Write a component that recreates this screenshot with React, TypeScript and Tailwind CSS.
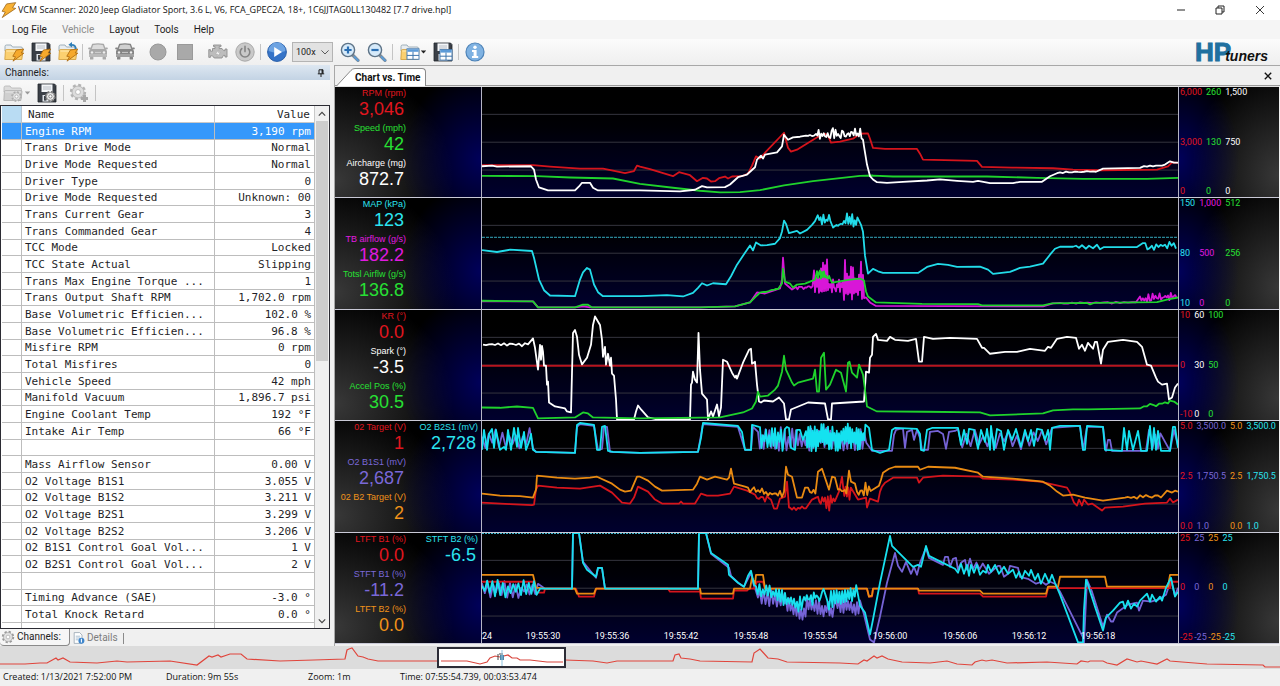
import type { ReactNode } from "react";

/* ---------- trace helpers ---------- */

function rand(seed: number) {
  let s = seed * 9301 + 49297;
  return () => {
    s = (s * 1103515245 + 12345) % 2147483648;
    return s / 2147483648;
  };
}

/** Alternating jagged run between two points, reaching `up` above and `down` below the trend. */
function burst(x0: number, x1: number, step: number, y0: number, y1: number, up: number, down: number, seed: number) {
  const r = rand(seed);
  const out: string[] = [];
  let sign = -1;
  for (let x = x0; x <= x1; x += step) {
    const y = y0 + ((y1 - y0) * (x - x0)) / (x1 - x0);
    const n = r();
    const k = up < 9 ? 0.1 + 0.9 * n * n : 0.2 + 0.8 * n;
    out.push(`${x.toFixed(1)},${(y + (sign < 0 ? -up * k : down * k)).toFixed(1)}`);
    if (up >= 9 || r() > 0.2) sign = -sign;
  }
  return out.join(" ");
}

type Trace = { color: string; points: string; width?: number; dash?: string };
type Gauge = { label: string; value: string; tone: string };
type Scale = { tone: string; marks: [string, string, string] };
type Panel = { name: string; top: number; gauges: Gauge[][]; scales: Scale[]; traces: Trace[]; times?: boolean };

const RED = "#d5141c";
const GREEN = "#1fd22c";
const WHITE = "#ffffff";
const CYAN = "#22dcea";
const MAGENTA = "#d816d8";
const PURPLE = "#7563d6";
const ORANGE = "#e98a12";

const tRed = "text-[#e0161f]";
const tGreen = "text-[#27e034]";
const tWhite = "text-white";
const tCyan = "text-[#2be4f0]";
const tMagenta = "text-[#e01ae0]";
const tPurple = "text-[#7a68d8]";
const tOrange = "text-[#f0921a]";

const panels: Panel[] = [
  {
    name: "Engine speed",
    top: 87,
    gauges: [
      [
        { label: "RPM (rpm)", value: "3,046", tone: tRed },
        { label: "Speed (mph)", value: "42", tone: tGreen },
        { label: "Aircharge (mg)", value: "872.7", tone: tWhite },
      ],
    ],
    scales: [
      { tone: tRed, marks: ["6,000", "3,000", "0"] },
      { tone: tGreen, marks: ["260", "130", "0"] },
      { tone: tWhite, marks: ["1,500", "750", "0"] },
    ],
    traces: [
      {
        color: RED,
        points:
          "482,165.5 533,165.5 550,167 580,169 603,169 613,171 625,173.7 634,171.5 637,166 640,167 650,169.5 673,176.7 679,172.7 690,175.7 697,181.7 703,178.3 707,179 711,182 715,181.7 719,178.7 725,177 728,179 732,177 742,176.7 748,174 752,166 756,156.7 760,159 766,152 784,133 788,148 791,152 797,150 818,137 825,134 828,136 831,143 840,142 853,139 860,134 868,133.7 870,139 873,148.3 885,149.3 917,149.3 920,154 923,160 977,161.3 982,167.3 1012,168 1053,168.7 1073,170 1100,170.7 1157,170 1168,166.7 1172,162.7 1178,163.3",
      },
      {
        color: GREEN,
        points:
          "482,176.3 537,176.7 570,178 613,179 640,184.3 673,188.3 700,191.3 720,193 740,192.7 760,190.7 784,186 813,181.7 840,178.7 860,176.3 873,176 893,177 987,177 1037,178.3 1083,179.3 1147,179.3 1178,178.3",
      },
      {
        color: WHITE,
        points: `482,166.7 492,166 497,167 531,166.7 534,170 536,180 539,188 548,191 575,191 579,187 582,183.3 590,183.3 593,188.3 598,191 640,191 680,192 695,190.3 702,186.7 707,188 725,187.7 730,185 738,177.7 747,175 755,167.7 757,160 761,156 763,159 765,155 777,152.7 782,146.7 784,135 788,140 793,137.7 800,137 ${burst(806, 815, 2, 136, 136, 1, 1, 3)} ${burst(816, 862, 1.3, 135, 135, 7, 5, 7)} 863,140 864,146.7 867,165 870,176.7 873,180 877,182.7 887,183.3 903,182.3 927,181 940,179.9 957,181.3 973,182.3 978,181.3 990,183.7 1013,183.7 1020,182.3 1042,182.3 1050,176.7 1057,173.7 ${burst(1060, 1097, 3, 173, 172, 1, 1, 9)} 1103,169 1140,168.3 ${burst(1144, 1167, 3, 167, 166, 2, 2, 12)} 1170,161.7 1174,163 1178,163`,
      },
    ],
  },
  {
    name: "Airflow",
    top: 198,
    gauges: [
      [
        { label: "MAP (kPa)", value: "123", tone: tCyan },
        { label: "TB airflow (g/s)", value: "182.2", tone: tMagenta },
        { label: "Totsl Airflw (g/s)", value: "136.8", tone: tGreen },
      ],
    ],
    scales: [
      { tone: tCyan, marks: ["150", "80", "10"] },
      { tone: tMagenta, marks: ["1,000", "500", "0"] },
      { tone: tGreen, marks: ["512", "256", "0"] },
    ],
    traces: [
      { color: "#35a9bd", points: "482,237.5 1178,237.5", width: 1, dash: "3 1" },
      {
        color: MAGENTA,
        points: `482,302 533,302 538,308 575,308 583,307 590,308 700,308 735,307 750,303 757,293 765,294 780,289 782,280 783,258 785,284 792,290 ${burst(796, 813, 1.5, 288, 287, 2, 4, 21)} ${burst(814, 821, 1, 284, 284, 14, 12, 22)} ${burst(821, 828, 1, 280, 280, 27, 18, 25)} ${burst(829, 844, 1, 286, 286, 7, 15, 23)} ${burst(845, 864, 1, 284, 284, 24, 17, 31)} 866,298 870,303 876,306.5 1043,307 1053,304 ${burst(1060, 1138, 4, 303.5, 303, 1, 1, 5)} ${burst(1140, 1177, 1.4, 300, 296, 5, 4, 26)}`,
      },
      {
        color: GREEN,
        points: `482,301.3 533,302 538,308 575,308 583,305.3 588,305.3 592,308 700,308 735,307 750,303 757,296 ${burst(760, 778, 2, 294, 289, 1, 1, 2)} 782,284 783,269 785,282 790,284 793,288 797,285 805,284 815,280 ${burst(817, 830, 1, 277, 277, 7, 5, 44)} 832,283 850,280 860,279 864,281 866,292 868,297 872,300 876,303 922,304.5 978,304.7 982,306 1043,306 1052,304 1087,303.5 1090,305 1094,303.5 1157,302.7 1168,300 1178,298`,
      },
      {
        color: CYAN,
        points: `482,250.3 497,252.3 510,250 532,251.3 534,258 539,280 544,290.7 550,296 575,296.7 580,280 583,272.7 587,268.3 590,270 594,285 598,292.7 603,296.7 640,296.7 667,295.7 683,297 693,293.3 698,288.3 702,283.7 707,286 713,283.7 726,284.7 731,276.7 737,265 743,256 750,245.7 753,250.7 756,242.7 761,245.7 767,245.3 775,244 780,238.3 782,231.7 784,220.7 786,224 789,233.3 797,231 800,233.7 807,230 812,225 ${burst(815, 831, 1.4, 222, 220, 7, 5, 51)} 833,227.7 ${burst(835, 846, 1.5, 227, 222, 3, 3, 52)} ${burst(847, 858, 1.3, 222, 223, 9, 7, 53)} 861,225 863,232 865,256 868,274 873,269.3 878,271.7 883,273.3 918,273.3 927,267.3 938,264.3 948,265.3 957,267.3 980,267 988,270 993,274.3 1010,272.3 1020,268.3 1030,267 1043,264 1050,255 1055,249 1060,247 1073,247 1076,246 1079,248 1082,245.5 1086,249 1089,246 1093,248.5 1097,245 1100,249.5 1104,247.3 1137,247.3 ${burst(1143, 1177, 2.2, 247, 245, 5, 4, 55)}`,
      },
    ],
  },
  {
    name: "Spark",
    top: 310,
    gauges: [
      [
        { label: "KR (°)", value: "0.0", tone: tRed },
        { label: "Spark (°)", value: "-3.5", tone: tWhite },
        { label: "Accel Pos (%)", value: "30.5", tone: tGreen },
      ],
    ],
    scales: [
      { tone: tRed, marks: ["10", "0", "-10"] },
      { tone: tWhite, marks: ["60", "30", "0"] },
      { tone: tGreen, marks: ["100", "50", "0"] },
    ],
    traces: [
      { color: "#b8141f", points: "482,366 1178,366", width: 2 },
      {
        color: WHITE,
        points: `${burst(483, 530, 3, 345, 345, 2, 2, 60)} 533,338.5 535,348 538,370 540,345 541,360 542,346 543,352 544,366 546,366 547,385 548,382 549,403 555,407 565,409 567,412 571,413 573,333 575,330 577,337 579,355 582,364.7 587,358 591,345 593,325 595,316.5 600,325 602,340 603,357 605,347 606,365 608,354 610,366 611,358 612,374 614,376 616,400 617,420 634,420 636,412 638,406 641,410 648,418 657,420 690,420 691,385 692,383 693,372 695,380 697,383 698.5,333 700,370 702,394 707,400 708,420 711,412 713,417 717,405 719,417 721,408 723,360 727,362 732,373 735,378 736,376 737,379 743,363 749,350 751,349 752,364 755,362 757,385 759,402 761,403 764,401 773,402 779,398 784,404 786,420 789,420 791,410 808,403 825,404 828,420 831,420 832,404 848,403 864,402 866,372 869,373 870,358 872,355 873,337 876,334 878,340 887,341 890,337 895,340 908,341 916,339 919,362 922,362 924,337 933,339 950,338 977,339 982,348 984,348 990,354 1005,352 1017,352 1030,349 1045,351 1048,347 1051,348 1057,339 1067,337 1076,338 1079,349 1082,345 1085,351 1088,343 1093,349 1095,342 1097,342 1101,364 1103,350 1108,342 1123,340 1137,342 1142,347 1147,365 1151,366 1156,378 1158,382 1162,385 1167,384 1169,400 1172,398 1175,388 1178,384`,
      },
      {
        color: GREEN,
        points: `482,408 500,408.3 517,407 533,408.3 538,419 575,418 583,413 588,414 593,418 640,419 720,418 743,413 752,409 756,402 758,392 760,397 768,396 775,390 778,386 782,372 784,356 786,370 792,383 794,386 798,383 813,379 815,370 817,392 819,392 821,358 824,353 826,390 830,385 836,370 841,373 846,392 848,363 849.5,362 852,373 857,378 859,365 863,375 865,390 867,407 877,412 925,412.3 980,413 990,416 1043,414 1053,411 1073,410 1088,410 1140,409 ${burst(1144, 1168, 3, 407, 403, 2, 2, 62)} 1170,401 1174,402 1178,405`,
      },
    ],
  },
  {
    name: "Oxygen sensors",
    top: 421,
    gauges: [
      [
        { label: "02 Target (V)", value: "1", tone: tRed },
        { label: "O2 B1S1 (mV)", value: "2,687", tone: tPurple },
        { label: "02 B2 Target (V)", value: "2", tone: tOrange },
      ],
      [{ label: "O2 B2S1 (mV)", value: "2,728", tone: tCyan }],
    ],
    scales: [
      { tone: tRed, marks: ["5.0", "2.5", "0.0"] },
      { tone: tPurple, marks: ["3,500.0", "1,750.5", "1.0"] },
      { tone: tOrange, marks: ["5.0", "2.5", "0.0"] },
      { tone: tCyan, marks: ["3,500.0", "1,750.5", "1.0"] },
    ],
    traces: [
      {
        color: PURPLE,
        points: `${burst(482, 534, 3.4, 440, 440, 12, 10, 71)} 536,452 575,453 577,427 580,424 594,426 598,450 602,449 604,427 607,427 610,452 640,453 698,452 703,424 738,427 745,450 751,450 753,427 ${burst(758, 868, 1.9, 440, 440, 13, 11, 72)} 872,451 892,451 894,435 896,430 900,429 903,429 905,448 907,432 912,430 914,440 917,430 920,438 922,450 928,450 930,432 938,431 943,434 946,449 949,432 955,431 ${burst(958, 1050, 4.2, 438, 438, 9, 12, 73)} 1052,428 1080,426 1083,450 1087,427 1103,427 1106,451 1108,440 1110,440 1112,451 1146,451 1149,430 ${burst(1150, 1162, 2.6, 442, 442, 10, 8, 75)} 1170,451 1174,430 1178,446`,
      },
      {
        color: "#14e2f0",
        points: `482,450 484,430 487,450 489,434 492,429 494,448 496,430 500,450 504,447 506,450 508,430 511,450 514,428 517,447 518,428 521,448 524,432 526,450 529,442 531,434 533,450 536,452 575,453 577,425 580,423 594,425 597,450 600,450 602,427 605,426 608,451 613,452 640,453 698,452 701,438 703,423 738,426 742,432 745,450 751,450 752,425 759,427 ${burst(760, 783, 1.5, 438, 438, 13, 14, 77)} 785,429 787,427 789,428 791,448 795,450 797,430 800,430 803,440 ${burst(806, 866, 1.1, 437, 437, 15, 15, 78)} 869,428 872,450 880,453 889,450 892,430 895,428 917,429 920,434 921,450 924,451 927,430 932,428 958,428 961,445 964,430 967,444 969,429 974,430 978,449 981,430 985,442 987,429 990,450 991,426 994,450 997,429 1001,431 1004,450 1008,430 1012,440 1016,429 1021,447 1025,430 1028,441 1031,430 1034,446 1037,429 1042,430 1045,440 1048,430 1050,450 1052,428 1060,426 1080,426 1083,450 1085,450 1087,426 1103,427 1105,450 1122,451 1124,428 1127,450 1129,431 1133,450 1138,431 1141,451 1147,451 1150,426 1152,450 1154,428 1156,450 1158,431 1161,451 1170,451 1173,427 1175,427 1178,448`,
      },
      {
        color: RED,
        points: `482,503 510,504.5 532,505.5 534,505 536,490 538,486 557,488 580,489 600,486 612,493 622,503 630,504 634,498 638,487 648,492 655,500 662,504 679,504 681,502 683,504 695,504 701,494 707,496 718,496 730,494 734,487 747,491 755,495 ${burst(757, 771, 2, 499, 498, 4, 4, 80)} 774,509 777,509 780,499 785,497 787,482 789,508 ${burst(790, 807, 2, 509, 508, 2, 2, 81)} 812,500 816,498 ${burst(818, 836, 1.4, 498, 500, 8, 12, 82)} 839,492 842,477 ${burst(843, 852, 1.3, 492, 496, 10, 6, 83)} 858,500 866,498 867,508 870,499 878,502 880,492 882,487 885,483 893,478 917,478 919,483 923,478 943,476 980,477 983,479 1013,480 1040,482 1067,488 1070,493 1074,503 1077,506 1079,500 1082,506 1084,500 1088,505 1092,504 1102,511 1105,508 1123,507 1145,504 1167,503 1170,499 1173,503 1178,500`,
      },
      {
        color: ORANGE,
        points: `482,494 500,496 520,496.5 533,498 536,490 537,476 557,478 575,479 590,478 597,477 612,484 620,490 625,492 631,491 637,477 640,477 648,481 655,487 662,491 693,490 697,484 700,477 707,480 715,477 727,480 729,478 731,469 734,484 745,487 ${burst(748, 784, 2, 490, 496, 4, 4, 90)} 785,480 786,467 788,475 792,477 797,498 802,498 805,488 808,488 ${burst(810, 817, 1.8, 493, 492, 4, 4, 91)} 818,472 822,469 825,478 829,490 832,477 835,478 838,490 ${burst(840, 847, 1.6, 491, 491, 4, 4, 92)} 849,471 851,482 855,484 ${burst(857, 872, 1.7, 493, 489, 8, 6, 93)} 879,486 881,480 883,473 889,469 895,467 918,467 920,470 928,467 955,468 978,473 983,477 1013,479 1043,482 1050,486 1057,492 1063,496 1073,495 1085,498 1103,501 1125,498 ${burst(1128, 1163, 3, 498, 496, 2, 2, 94)} 1167,491 1172,493 1175,491 1178,492`,
      },
    ],
  },
  {
    name: "Fuel trims",
    top: 533,
    gauges: [
      [
        { label: "LTFT B1 (%)", value: "0.0", tone: tRed },
        { label: "STFT B1 (%)", value: "-11.2", tone: tPurple },
        { label: "LTFT B2 (%)", value: "0.0", tone: tOrange },
      ],
      [{ label: "STFT B2 (%)", value: "-6.5", tone: tCyan }],
    ],
    scales: [
      { tone: tRed, marks: ["25", "0", "-25"] },
      { tone: tPurple, marks: ["25", "0", "-25"] },
      { tone: tOrange, marks: ["25", "0", "-25"] },
      { tone: tCyan, marks: ["25", "0", "-25"] },
    ],
    times: true,
    traces: [
      { color: "#3fb8d0", points: "482,533.5 1178,533.5", width: 1, dash: "2 1" },
      {
        color: PURPLE,
        points: `${burst(482, 538, 2.8, 590, 590, 9, 9, 101)} 545,589 572,589 573,533 579,533 583,562 596,578 598,568 602,568 605,589 698,589 699,533 706,533 711,554 729,568 731,576 738,583 744,587 751,573 754,586 ${burst(756, 785, 1.9, 594, 602, 9, 9, 102)} ${burst(786, 806, 1.5, 607, 615, 10, 10, 103)} ${burst(807, 835, 1.5, 606, 612, 9, 10, 104)} ${burst(836, 860, 1.5, 605, 608, 9, 10, 105)} 864,615 870,640 874,643 880,617 887,583 895,553 898,566 902,572 906,562 911,574 914,567 917,575 920,563 926,548 929,558 943,565 945,557 948,557 950,567 953,559 956,558 958,570 961,563 965,560 967,570 ${burst(970, 985, 3.2, 567, 568, 9, 6, 106)} 989,574 998,566 1000,566 1004,577 1008,574 1010,566 1018,568 1020,577 1028,579 1036,584 1042,582 1046,585 1050,582 1055,584 1060,592 1083,638 1084,643 1087,580 1092,592 1103,627 1107,615 1111,622 1113,622 1117,613 1128,605 1137,603 1139,611 1143,601 1151,602 1158,600 1166,595 1171,580 1175,596 1178,588`,
      },
      {
        color: RED,
        points:
          "482,582 533,582 537,593 544,593 545,589 576,589 579,597 594,597 596,589 668,589 670,592 700,592 701,599 733,599 734,591 747,591 749,589 754,589 757,582 763,582 765,589 867,589 869,597 872,597 873,589 918,589 919,594 980,594 983,597 1046,597 1048,588.5 1170,588.5 1171,582 1178,582",
      },
      {
        color: ORANGE,
        points:
          "482,575 533,575 536,588 545,589 575,589 577,594 594,594 596,589 700,589 701,594 733,594 734,589 750,589 752,578 755,584 756,575 763,575 765,589 867,589 869,597 872,596 873,589 918,589 919,591 980,591 983,594 1046,594 1048,587 1058,587 1060,577 1105,577 1107,587 1168,587 1170,575 1178,575",
      },
      {
        color: "#18e0ee",
        points: `${burst(482, 538, 2.6, 589, 589, 9, 9, 111)} 540,589 572,589 573,533 579,533 583,563 587,570 596,577 598,568 602,568 605,589 698,589 699,533 706,533 711,553 728,565 729,575 738,583 744,587 748,576 751,571 754,585 ${burst(756, 772, 1.7, 593, 592, 9, 7, 112)} ${burst(773, 803, 1.5, 594, 607, 9, 8, 113)} ${burst(804, 824, 1.4, 600, 595, 8, 8, 114)} 827,600 829,610 ${burst(831, 857, 1.4, 600, 594, 9, 8, 115)} 860,606 865,613 870,635 873,620 880,583 890,536 892,546 903,557 913,567 918,565 921,567 926,546 929,556 943,563 955,569 958,573 961,564 964,574 967,565 969,576 971,565 974,573 977,565 980,575 983,571 986,573 988,565 991,572 995,565 999,574 1004,567 1008,574 1013,570 1016,578 1019,572 1022,579 1025,571 1029,576 1031,570 1035,580 1038,574 1041,584 1045,574 1049,583 1052,575 1055,583 1060,595 1078,643 1083,643 1084,610 1086,580 1088,585 1095,607 1103,631 1106,618 1113,611 1120,603 1123,602 1125,609 1128,601 1131,609 1134,604 1137,607 1140,601 1147,594 1150,602 1152,595 1156,602 1160,597 1162,601 1166,588 1171,578 1175,597 1178,592`,
      },
    ],
  },
];

const times = [
  { x: 543, text: "19:55:30" },
  { x: 612, text: "19:55:36" },
  { x: 681, text: "19:55:42" },
  { x: 751, text: "19:55:48" },
  { x: 820, text: "19:55:54" },
  { x: 890, text: "19:56:00" },
  { x: 960, text: "19:56:06" },
  { x: 1029, text: "19:56:12" },
  { x: 1098, text: "19:56:18" },
];

const channels: [string, string][] = [
  ["Engine RPM", "3,190 rpm"],
  ["Trans Drive Mode", "Normal"],
  ["Drive Mode Requested", "Normal"],
  ["Driver Type", "0"],
  ["Drive Mode Requested", "Unknown: 00"],
  ["Trans Current Gear", "3"],
  ["Trans Commanded Gear", "4"],
  ["TCC Mode", "Locked"],
  ["TCC State Actual", "Slipping"],
  ["Trans Max Engine Torque ...", "1"],
  ["Trans Output Shaft RPM", "1,702.0 rpm"],
  ["Base Volumetric Efficien...", "102.0 %"],
  ["Base Volumetric Efficien...", "96.8 %"],
  ["Misfire RPM", "0 rpm"],
  ["Total Misfires", "0"],
  ["Vehicle Speed", "42 mph"],
  ["Manifold Vacuum", "1,896.7 psi"],
  ["Engine Coolant Temp", "192 °F"],
  ["Intake Air Temp", "66 °F"],
  ["", ""],
  ["Mass Airflow Sensor", "0.00 V"],
  ["O2 Voltage B1S1", "3.055 V"],
  ["O2 Voltage B1S2", "3.211 V"],
  ["O2 Voltage B2S1", "3.299 V"],
  ["O2 Voltage B2S2", "3.206 V"],
  ["O2 B1S1 Control Goal Vol...", "1 V"],
  ["O2 B2S1 Control Goal Vol...", "2 V"],
  ["", ""],
  ["Timing Advance (SAE)", "-3.0 °"],
  ["Total Knock Retard", "0.0 °"],
  ["", ""],
];

/* ---------- icons ---------- */

const Svg = ({ children, className = "size-5" }: { children: ReactNode; className?: string }) => (
  <svg viewBox="0 0 20 20" className={className} aria-hidden="true">
    {children}
  </svg>
);

const Bolt = ({ x = 0, y = 0, s = 1 }: { x?: number; y?: number; s?: number }) => (
  <path
    transform={`translate(${x} ${y}) scale(${s})`}
    d="M4.5 1 L12 0 L9.4 4 L12 4.4 L1 12.4 L3.6 8 L0.8 7.4 Z"
    fill="#f6a92c"
    stroke="#a8650c"
    strokeWidth="0.8"
    strokeLinejoin="round"
  />
);

const Folder = ({ gray = false }: { gray?: boolean }) => (
  <>
    <path d="M1 4.5 Q1 3 2.5 3 H7 L8.5 5 H17 Q18.5 5 18.5 6.5 V9 H1 Z" fill={gray ? "#dcdcdc" : "#e9edf0"} stroke={gray ? "#b5b5b5" : "#8aa0ac"} strokeWidth="0.8" />
    <path d="M0.8 17.5 L1.4 8.5 Q1.5 7.6 2.4 7.6 H18 Q19.2 7.6 19 8.8 L17.8 17.5 Z" fill={gray ? "#cfcfcf" : "#fbd070"} stroke={gray ? "#adadad" : "#cf9a35"} strokeWidth="0.8" />
    <path d="M2.4 9 H17.8" stroke={gray ? "#e8e8e8" : "#ffeab5"} strokeWidth="1" />
  </>
);

const Floppy = () => (
  <>
    <path d="M1 1 H17.5 L19 2.5 V19 H1 Z" fill="#3a3f47" stroke="#22262c" strokeWidth="0.8" />
    <rect x="4.5" y="1.4" width="11" height="7.6" fill="#f4f6f8" />
    <path d="M6 4 H14 M6 6 H14" stroke="#a9b0b8" strokeWidth="0.8" />
    <rect x="5.5" y="12" width="9" height="6.6" fill="#dfe3e8" />
    <rect x="7" y="13" width="2.4" height="4.6" fill="#3a3f47" />
  </>
);

const Gear = ({ cx, cy, r, fill = "#ededed", stroke = "#8b8b8b" }: { cx: number; cy: number; r: number; fill?: string; stroke?: string }) => (
  <>
    <circle cx={cx} cy={cy} r={r} fill={fill} stroke={stroke} strokeWidth={r * 0.4} strokeDasharray={`${r * 0.42} ${r * 0.365}`} />
    <circle cx={cx} cy={cy} r={r * 0.86} fill={fill} stroke={stroke} strokeWidth="0.7" />
    <circle cx={cx} cy={cy} r={r * 0.36} fill="#fff" stroke={stroke} strokeWidth="0.8" />
  </>
);

const Car = ({ dark = false }: { dark?: boolean }) => {
  const c = dark ? "#858585" : "#a9a9a9";
  return (
    <Svg>
      <path d="M4.6 2.5 Q10 1.2 15.4 2.5 L17.2 7.6 H2.8 Z" fill={dark ? "#d0d0d0" : "#dcdcdc"} stroke={c} strokeWidth="1.4" />
      <rect x="0.2" y="5.4" width="2.8" height="2" rx="0.8" fill={c} />
      <rect x="17" y="5.4" width="2.8" height="2" rx="0.8" fill={c} />
      <path d="M1 9 Q1.2 7.4 3 7.4 H17 Q18.8 7.4 19 9 V14.8 H1 Z" fill={c} />
      <circle cx="4" cy="10.4" r="1.2" fill="#efefef" />
      <circle cx="16" cy="10.4" r="1.2" fill="#efefef" />
      <path d="M7 10.4 H13" stroke="#dcdcdc" strokeWidth="0.8" />
      <path d="M1 13 H19" stroke="#dcdcdc" strokeWidth="0.7" />
      <rect x="2" y="14.8" width="3.4" height="2.8" rx="0.6" fill={c} />
      <rect x="14.6" y="14.8" width="3.4" height="2.8" rx="0.6" fill={c} />
    </Svg>
  );
};

const Magnifier = ({ plus }: { plus: boolean }) => (
  <Svg>
    <path d="M12.6 13 L18 18.4" stroke="#7d8a96" strokeWidth="3.2" strokeLinecap="round" />
    <path d="M14.6 15 L18 18.4" stroke="#5b9bd5" strokeWidth="2" strokeLinecap="round" />
    <circle cx="8" cy="8" r="6.6" fill="#d6eafa" stroke="#5d7387" strokeWidth="1.4" />
    <path d={plus ? "M4.4 8 H11.6 M8 4.4 V11.6" : "M4.4 8 H11.6"} stroke="#2b6fb3" strokeWidth="2.2" />
  </Svg>
);

const Grid = ({ x, y }: { x: number; y: number }) => (
  <g transform={`translate(${x} ${y})`}>
    <rect width="12" height="10.5" fill="#fff" stroke="#3f76ad" strokeWidth="0.9" />
    <rect x="0.4" y="0.4" width="11.2" height="2.6" fill="#5c9bd8" />
    <path d="M0 6.6 H12 M6 3 V10.5" stroke="#3f76ad" strokeWidth="1" />
  </g>
);

const Tool = ({ label, children, disabled = false }: { label: string; children: ReactNode; disabled?: boolean }) => (
  <button type="button" aria-label={label} disabled={disabled} className="flex h-6 w-[27px] shrink-0 items-center justify-center">
    {children}
  </button>
);

const Divider = ({ className = "mx-[2px]" }: { className?: string }) => <span className={`h-4 w-px shrink-0 bg-[#c4c4c4] ${className}`} />;

/* ---------- window parts ---------- */

function TitleBar() {
  return (
    <header className="flex h-5 shrink-0 items-center bg-white pl-px">
      <Svg className="size-4">
        <path d="M7 2.4 L18.4 0.8 L14.4 7.2 L18.4 8 L1.6 19.4 L5.4 12.6 L1.4 11.6 Z" fill="#f8b133" stroke="#9c661c" strokeWidth="1" strokeLinejoin="round" />
      </Svg>
      <h1 className="ml-px flex-1 truncate font-['Open_Sans',sans-serif] text-[9px] leading-5 text-[#111]">
        VCM Scanner: 2020 Jeep Gladiator Sport, 3.6 L, V6, FCA_GPEC2A, 18+, 1C6JJTAG0LL130482 [7.7 drive.hpl]
      </h1>
      <button type="button" aria-label="Minimize" className="flex h-5 w-[39px] items-center justify-center">
        <Svg className="size-[10px]">
          <path d="M2 10 H18" stroke="#222" strokeWidth="2" />
        </Svg>
      </button>
      <button type="button" aria-label="Restore" className="flex h-5 w-[39px] items-center justify-center">
        <Svg className="size-[10px]">
          <path d="M2 6 H14 V18 H2 Z M6 6 V2 H18 V14 H14" fill="none" stroke="#222" strokeWidth="2" />
        </Svg>
      </button>
      <button type="button" aria-label="Close" className="flex h-5 w-[41px] items-center justify-center">
        <Svg className="size-[10px]">
          <path d="M2 2 L18 18 M18 2 L2 18" stroke="#222" strokeWidth="1.8" />
        </Svg>
      </button>
    </header>
  );
}

function MenuBar() {
  const item = "h-[19px] leading-[19px]";
  return (
    <nav className="flex h-[19px] shrink-0 gap-[15px] bg-[#f5f5f5] pl-3 text-[10px] text-[#1e1e1e]">
      <button type="button" className={item}>Log File</button>
      <button type="button" disabled className={`${item} text-[#8d8d8d]`}>Vehicle</button>
      <button type="button" className={item}>Layout</button>
      <button type="button" className={item}>Tools</button>
      <button type="button" className={item}>Help</button>
    </nav>
  );
}

function ToolBar() {
  return (
    <div className="flex h-[26px] shrink-0 items-center bg-linear-to-b from-[#fbfbfb] to-[#efefef]">
      <Tool label="Open log">
        <Svg><Folder /><Bolt x={8} y={7} s={0.98} /></Svg>
      </Tool>
      <Tool label="Save log">
        <Svg><Floppy /><Bolt x={8} y={7} s={0.98} /></Svg>
      </Tool>
      <Tool label="Reopen log">
        <Svg>
          <Folder />
          <Bolt x={8} y={7} s={0.98} />
          <path d="M17.5 7 Q18 2.8 13.4 2.8" fill="none" stroke="#2f7fb8" strokeWidth="1.8" />
          <path d="M14 0 L10.4 2.8 L14 5.6 Z" fill="#2f7fb8" />
        </Svg>
      </Tool>
      <Divider className="mx-px" />
      <Tool label="Connect vehicle" disabled><Car /></Tool>
      <Tool label="Vehicle information" disabled><Car dark /></Tool>
      <span className="w-[6px]" />
      <Tool label="Record" disabled>
        <Svg><circle cx="10" cy="10" r="8" fill="#a9a9a9" stroke="#989898" /></Svg>
      </Tool>
      <Tool label="Stop" disabled>
        <Svg><rect x="2.5" y="2.5" width="15" height="15" fill="#a9a9a9" stroke="#9a9a9a" /></Svg>
      </Tool>
      <span className="w-[6px]" />
      <Tool label="Engine" disabled>
        <Svg className="h-5 w-[22px]">
          <path d="M4.5 6.5 H7 V4.6 H5.5 V3 H13 V4.6 H11.2 V6.5 H14 L15.6 8.6 H17 V7 H19 V15 H17 V13.4 H15.4 L14 16 H6.2 L4.5 13.8 H2.4 V15.4 H0.8 V7.6 H2.4 V9.2 H4.5 Z" fill="#bdbdbd" stroke="#8f8f8f" strokeWidth="0.9" />
          <path d="M10.8 7.8 L7.6 12 H9.6 L9.2 14.6 L12.2 10.6 H10.2 Z" fill="#f8f8f8" stroke="#8f8f8f" strokeWidth="0.3" />
        </Svg>
      </Tool>
      <Tool label="Power" disabled>
        <Svg>
          <circle cx="10" cy="10" r="9.2" fill="#c9c9c9" stroke="#a8a8a8" />
          <path d="M6.8 6.6 A4.8 4.8 0 1 0 13.2 6.6 M10 4.2 V9.6" fill="none" stroke="#848484" strokeWidth="1.6" strokeLinecap="round" />
        </Svg>
      </Tool>
      <Divider />
      <Tool label="Play">
        <Svg>
          <circle cx="10" cy="10" r="9.4" fill="#3674c8" stroke="#2a5fa8" />
          <path d="M1.6 9 A8.4 8.4 0 0 1 18.4 9 Q10 12.5 1.6 9 Z" fill="#6da3e2" />
          <path d="M7.2 5 L15 10 L7.2 15 Z" fill="#fff" />
        </Svg>
      </Tool>
      <div className="relative mx-[2px] flex shrink-0 items-center">
        <select aria-label="Playback speed" className="h-5 w-[41px] appearance-none rounded-none border border-[#b4b4b4] bg-[#e2e2e2] pl-[3px] text-[9px] leading-[18px] text-[#222]" defaultValue="100x">
          <option>100x</option>
        </select>
        <Svg className="pointer-events-none absolute right-1 size-2">
          <path d="M1 6 L10 15 L19 6" fill="none" stroke="#555" strokeWidth="2.4" />
        </Svg>
      </div>
      <span className="w-px" />
      <Tool label="Zoom in"><Magnifier plus /></Tool>
      <Tool label="Zoom out"><Magnifier plus={false} /></Tool>
      <Divider className="mr-[4px] ml-[2px]" />
      <button type="button" aria-label="Open layout" className="flex h-6 w-8 shrink-0 items-center justify-center gap-px">
        <Svg>
          <Folder />
          <Grid x={7} y={6.8} />
        </Svg>
        <Svg className="h-1 w-[5px]"><path d="M-4 2 H24 L10 18 Z" fill="#222" /></Svg>
      </button>
      <Tool label="Save layout">
        <Svg><Floppy /><Grid x={7} y={7.6} /></Svg>
      </Tool>
      <Divider />
      <Tool label="About">
        <Svg>
          <circle cx="10" cy="10" r="9" fill="#7fb2e2" stroke="#4d83b8" strokeWidth="1.2" />
          <circle cx="10" cy="5.2" r="1.7" fill="#fff" />
          <path d="M7 8 H11.6 V14 H13.2 V16 H7 V14 H8.6 V10 H7 Z" fill="#fff" />
        </Svg>
      </Tool>
      <div className="ml-auto flex items-end pr-3 font-['Liberation_Sans',sans-serif] font-bold">
        <span className="text-[26px] leading-6 text-[#20709f] [-webkit-text-stroke:1px_#20709f]">HP</span>
        <span className="-ml-[6px] text-[14px] leading-4 text-[#111] italic">tuners</span>
      </div>
    </div>
  );
}

function ChannelsPanel() {
  return (
    <aside className="flex w-[330px] shrink-0 flex-col bg-[#f0f0f0]">
      <div className="flex h-[15px] shrink-0 items-center justify-between bg-linear-to-b from-[#dde7f1] to-[#c3d3e4] pr-[5px] pl-[5px]">
        <h2 className="text-[10px] leading-[15px] text-[#222]">Channels:</h2>
        <button type="button" aria-label="Pin panel">
          <Svg className="size-2">
            <path d="M5 2 H15 V11 M5 2 V11 M2 12 H18 M10 12 V20" fill="none" stroke="#111" strokeWidth="2.4" />
            <path d="M13 2 V12" stroke="#111" strokeWidth="3" />
          </Svg>
        </button>
      </div>
      <div className="flex h-[25px] shrink-0 items-center bg-linear-to-b from-[#f8f8f8] to-[#efefef] pl-[3px]">
        <button type="button" aria-label="Open channels" disabled className="mr-[7px] flex items-center">
          <Svg><Folder gray /><Gear cx={13.5} cy={13.5} r={4.4} fill="#e4e4e4" stroke="#ababab" /></Svg>
          <Svg className="ml-[2px] h-1 w-[5px]"><path d="M-4 2 H24 L10 18 Z" fill="#999" /></Svg>
        </button>
        <button type="button" aria-label="Save channels">
          <Svg><Floppy /><Gear cx={13.4} cy={13.4} r={4.6} stroke="#6c6c6c" /></Svg>
        </button>
        <Divider className="mr-[5px] ml-[6px]" />
        <button type="button" aria-label="Channel settings" disabled>
          <Svg>
            <Gear cx={9} cy={9} r={6.8} fill="#dcdcdc" stroke="#b3b3b3" />
            <path d="M15.5 12 V19 M12 15.5 H19" stroke="#a8a8a8" strokeWidth="3" />
          </Svg>
        </button>
        <Divider className="ml-[6px]" />
      </div>
      <div className="flex min-h-0 flex-1 border border-[#2b2b33] bg-white pl-px">
        <div className="min-w-0 flex-1 overflow-hidden">
          <table className="w-full table-fixed border-separate border-spacing-0 font-['DejaVu_Sans_Mono',monospace] text-[11px] leading-[15px] text-[#1f1f28]">
            <colgroup>
              <col className="w-5" />
              <col />
              <col className="w-[100px]" />
            </colgroup>
            <tbody className="[&>tr]:h-[17px] [&>tr:nth-child(3n)]:h-4">
              <tr>
                <td className="border-r border-b border-[#b9c6d0] bg-[#b9dcf3] p-0" />
                <th scope="col" className="border-r border-b border-[#c9c9c9] p-0 pl-[6px] text-left font-normal">Name</th>
                <th scope="col" className="border-r border-b border-[#c9c9c9] p-0 pr-1 text-right font-normal">Value</th>
              </tr>
              {channels.map(([name, value], i) => (
                <tr key={i} className={i === 0 ? "bg-[#3598fb] text-white" : ""}>
                  <td className="border-r border-b border-[#bdbdbd] p-0" />
                  <td className="overflow-hidden border-r border-b border-[#bdbdbd] p-0 pl-[3px] whitespace-nowrap">{name}</td>
                  <td className="border-r border-b border-[#bdbdbd] p-0 pr-[3px] text-right whitespace-nowrap">{value}</td>
                </tr>
              ))}
            </tbody>
          </table>
        </div>
        <div className="flex w-[14px] shrink-0 flex-col items-center bg-[#f0f0f0]">
          <button type="button" aria-label="Scroll up" className="flex h-[15px] items-center">
            <Svg className="size-2"><path d="M2 14 L10 6 L18 14" fill="none" stroke="#444" strokeWidth="3" /></Svg>
          </button>
          <div className="h-[240px] w-3 bg-[#cdcdcd]" />
          <button type="button" aria-label="Scroll down" className="mt-auto flex h-[14px] items-center">
            <Svg className="size-2"><path d="M2 6 L10 14 L18 6" fill="none" stroke="#444" strokeWidth="3" /></Svg>
          </button>
        </div>
      </div>
      <div role="tablist" className="flex h-[17px] shrink-0 text-[10px] leading-4 text-[#222]">
        <button type="button" role="tab" aria-selected="true" className="flex w-[70px] items-center gap-[2px] rounded-b-sm border-r border-b border-[#8a8a8a] bg-[#f6f6f6] pl-px">
          <Svg className="size-[14px]"><Gear cx={10} cy={10} r={7.4} fill="#e2e2e2" stroke="#9a9a9a" /></Svg>
          Channels:
        </button>
        <button type="button" role="tab" aria-selected="false" className="flex items-center gap-[2px] pl-[3px] text-[#7d7d7d]">
          <Svg className="size-3">
            <path d="M2 1 H11 L15 5 V19 H2 Z" fill="#fff" stroke="#8c9aa8" strokeWidth="1.2" />
            <path d="M4.5 7 H12 M4.5 10 H12 M4.5 13 H9" stroke="#9db4c8" strokeWidth="1.4" />
            <circle cx="14" cy="14.5" r="5" fill="#3f86cc" />
            <path d="M14 11.4 V17.6" stroke="#fff" strokeWidth="1.8" />
          </Svg>
          Details
        </button>
        <span className="mt-1 ml-[5px] h-[11px] w-px bg-[#8a8a8a]" />
      </div>
    </aside>
  );
}

function PanelRow({ panel }: { panel: Panel }) {
  const height = 111;
  return (
    <section aria-label={panel.name} className="flex min-h-0 flex-1 border-b border-[#c9c9d6]">
      <div className="flex w-[147px] shrink-0 border-r border-[#b4b4c4] bg-black bg-[radial-gradient(80px_90px_at_100%_66%,#00005a_0%,transparent_100%),radial-gradient(120px_110px_at_0%_85%,#383838_0%,transparent_100%)]">
        {panel.gauges.map((column, i) => (
          <div key={i} className="w-[72px] text-right font-['Liberation_Sans',sans-serif]">
            {column.map((g) => (
              <div key={g.label} className={`mb-[2px] whitespace-nowrap ${g.tone}`}>
                <div className="flex justify-end pr-px text-[9px] leading-3">{g.label}</div>
                <div className="pr-[3px] text-[18px] leading-[21px]">{g.value}</div>
              </div>
            ))}
          </div>
        ))}
      </div>
      <div className="relative min-w-0 flex-1 overflow-hidden bg-linear-to-b from-black via-[#00000f] to-[#00002e]">
        <svg viewBox={`482 ${panel.top} 696 ${height}`} preserveAspectRatio="none" className="block size-full" aria-hidden="true">
          {[1, 2, 3].map((q) => (
            <line key={q} x1="482" x2="1178" y1={panel.top + q * 28 - 0.5} y2={panel.top + q * 28 - 0.5} stroke="#34343f" strokeWidth="1" vectorEffect="non-scaling-stroke" />
          ))}
          {panel.traces.map((t, i) => (
            <polyline key={i} points={t.points} fill="none" stroke={t.color} strokeWidth={t.width ?? 1.8} strokeDasharray={t.dash} strokeLinejoin="round" vectorEffect="non-scaling-stroke" />
          ))}
        </svg>
        {panel.times && (
          <div className="text-[9px] leading-3 text-white">
            <span className="absolute bottom-px left-0">24</span>
            {times.map((t) => (
              <span key={t.text} className="absolute bottom-px -translate-x-1/2" style={{ left: `${((t.x - 482) / 696) * 100}%` }}>
                {t.text}
              </span>
            ))}
          </div>
        )}
      </div>
      <div className="flex w-[101px] shrink-0 gap-1 border-l border-[#b4b4c4] bg-black bg-[radial-gradient(60px_90px_at_0%_66%,#00005a_0%,transparent_100%),radial-gradient(90px_110px_at_100%_80%,#383838_0%,transparent_100%)] pl-px text-[9px] leading-[11px] whitespace-nowrap">
        {panel.scales.map((s, i) => (
          <div key={i} className={`flex flex-col justify-between ${s.tone}`}>
            <span>{s.marks[0]}</span>
            <span className="w-0">{s.marks[1]}</span>
            <span className="w-0">{s.marks[2]}</span>
          </div>
        ))}
      </div>
    </section>
  );
}

function ChartPane() {
  return (
    <main className="ml-1 flex min-w-0 flex-1 flex-col border-t border-l border-[#a8a8a8] bg-[#f0f0f0]">
      <div className="flex h-5 shrink-0 items-end justify-between border-b border-[#9a9a9a]">
        <div role="tablist" className="-mb-px flex">
          <svg viewBox="0 0 18 18" className="ml-[2px] h-[18px] w-[18px]" aria-hidden="true">
            <path d="M0 18 L14 2.4 Q15.5 0.5 18 0.5 V18 Z" fill="#fff" />
            <path d="M0 17.5 L14 2.4 Q15.5 0.5 18 0.5" fill="none" stroke="#8a8a8a" />
          </svg>
          <button type="button" role="tab" aria-selected="true" className="h-[18px] rounded-tr-sm border-t border-r border-[#8a8a8a] bg-white pr-1 text-[10px] leading-[15px] font-bold text-[#111]">
            Chart vs. Time
          </button>
        </div>
        <button type="button" aria-label="Close chart" className="mr-2 flex h-[18px] items-center">
          <Svg className="size-2"><path d="M2 2 L18 18 M18 2 L2 18" stroke="#111" strokeWidth="3.4" /></Svg>
        </button>
      </div>
      <div className="mr-px mb-[2px] flex min-h-0 flex-1 flex-col border-t border-[#e2e2e2]">
        {panels.map((p) => (
          <PanelRow key={p.name} panel={p} />
        ))}
      </div>
    </main>
  );
}

function Overview() {
  return (
    <svg viewBox="0 646 1280 23" preserveAspectRatio="none" className="block h-[23px] w-full shrink-0 bg-[#dcdcdc]" role="img" aria-label="Log overview">
      <g fill="none" stroke="#e0453c" strokeWidth="1.2">
        <polyline points="0,664 25,664 40,663 47,663 56,658 58,660 63,658 70,662 97,663 117,661 127,662 170,661 197,665 209,656 212,657 218,655 221,657 230,654 241,654 247,659 280,661 314,660 345,659 347,650 349,649 352,648 358,656 363,657 368,659 378,661 438,661" />
        <polyline points="565,660 593,661 607,663 617,661 673,661 675,655 679,654 681,658 690,659 700,661 752,662 754,653 760,649 768,658 778,659 787,662 840,663 858,664 864,660 867,661 874,656 877,658 882,656 888,659 902,662 930,663 947,661 957,664 972,665 975,662 982,660 986,661 992,660 1007,663 1047,662 1077,664 1081,661 1088,662 1090,661 1103,661 1107,663 1117,665 1127,659 1137,662 1141,661 1157,664 1167,659 1170,661 1182,662 1207,664 1263,665 1265,667 1280,667" />
      </g>
      <rect x="438" y="648" width="127" height="19" fill="#fff" stroke="#2c2c36" strokeWidth="2" />
      <polyline points="441,661 467,661 480,664 487,662 490,658 495,656 500,657 508,655 512,658 517,658 520,660 530,660 547,662 563,662" fill="none" stroke="#d8453c" strokeWidth="1.2" />
      <path d="M498 654 V660 M499 654 H503" stroke="#444" strokeWidth="1" />
      <rect x="500" y="655" width="4" height="5" fill="#4d86a8" />
      <path d="M502 650 V666" stroke="#8fc4e0" strokeWidth="1" />
    </svg>
  );
}

export default function App() {
  return (
    <div className="flex h-screen flex-col overflow-hidden bg-[#f0f0f0] font-[Roboto,sans-serif]">
      <TitleBar />
      <MenuBar />
      <ToolBar />
      <div className="flex min-h-0 flex-1">
        <ChannelsPanel />
        <ChartPane />
      </div>
      <Overview />
      <footer className="flex h-[17px] shrink-0 bg-[#f0f0f0] pl-[3px] font-['Open_Sans',sans-serif] text-[9px] leading-4 whitespace-nowrap text-[#111]">
        <span className="w-[163px]">Created: 1/13/2021 7:52:00 PM</span>
        <span className="w-[142px]">Duration: 9m 55s</span>
        <span className="w-[92px]">Zoom: 1m</span>
        <span>Time: 07:55:54.739, 00:03:53.474</span>
      </footer>
    </div>
  );
}
